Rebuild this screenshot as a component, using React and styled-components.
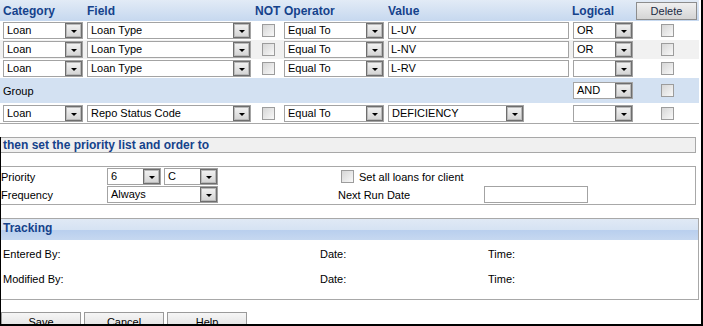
import React from 'react';
import styled, { createGlobalStyle } from 'styled-components';

const GlobalStyle = createGlobalStyle`
  html, body {
    margin: 0;
    padding: 0;
    background: #fff;
  }
  body {
    font-family: Tahoma, "Liberation Sans", Arial, sans-serif;
    font-size: 11px;
    color: #000;
  }
`;

const COLS = '84px 168px 29px 104px 184px 64px 1fr';

const Frame = styled.div`
  width: 703px;
  height: 326px;
  box-sizing: border-box;
  border-right: 2px solid #000;
  border-bottom: 2px solid #000;
  overflow: hidden;
  display: flex;
  flex-direction: column;
`;

const Criteria = styled.div`
  border-bottom: 1px solid #a8a8a8;
  margin-right: 2px;
`;

const Row = styled.div`
  display: grid;
  grid-template-columns: ${COLS};
  align-items: center;
  padding-left: 3px;
  height: ${(p) => p.$h || 19}px;
  background: ${(p) => p.$bg || '#fff'};
`;

const HeaderRow = styled(Row)`
  background: linear-gradient(#e2ebf6, #c6d8ef);
`;

const HeadLabel = styled.span`
  font-size: 12px;
  font-weight: bold;
  color: #15428b;
`;

const DeleteButton = styled.button`
  width: 61px;
  height: 18px;
  padding: 0;
  font-family: inherit;
  font-size: 11px;
  color: #1b2a44;
  border: 1px solid #8d8d8d;
  background: linear-gradient(#f0f0f0, #d4d4d4);
`;

const SelectBox = styled.div`
  display: flex;
  box-sizing: border-box;
  width: ${(p) => p.$w}px;
  height: 17px;
  border: 1px solid #a3a3a3;
  background: #fff;
  margin-left: ${(p) => p.$ml || 0}px;
`;

const SelectText = styled.span`
  flex: 1;
  padding-left: 3px;
  line-height: 15px;
  white-space: nowrap;
  overflow: hidden;
`;

const DropButton = styled.span`
  box-sizing: border-box;
  width: 17px;
  height: 15px;
  border: 1px solid #6e6e6e;
  box-shadow: inset 0 0 0 1px #b9b9b9;
  background: linear-gradient(#f3f3f3, #d3d3d3);
  display: flex;
  align-items: center;
  justify-content: center;

  &::after {
    content: '';
    margin-top: 2px;
    border-left: 3px solid transparent;
    border-right: 3px solid transparent;
    border-top: 3px solid #000;
  }
`;

const TextBox = styled.div`
  box-sizing: border-box;
  width: ${(p) => p.$w}px;
  height: 17px;
  border: 1px solid #a3a3a3;
  background: #fff;
  padding-left: 2px;
  line-height: 15px;
`;

const Check = styled.span`
  display: block;
  box-sizing: border-box;
  width: 13px;
  height: 13px;
  border: 1px solid #9c9c9c;
  background: linear-gradient(135deg, #d6d6d6, #f8f8f8);
  margin-left: ${(p) => p.$ml || 0}px;
`;

const Centered = styled.div`
  display: flex;
  justify-content: center;
`;

const GroupLabel = styled.span`
  grid-column: 1 / 6;
`;

const Lower = styled.div`
  border-left: 1px solid #000;
  display: flex;
  flex-direction: column;
  margin-top: 13px;
`;

const SectionBar = styled.div`
  box-sizing: border-box;
  width: 695px;
  height: 16px;
  border-top: 1px solid #a8a8a8;
  border-bottom: 1px solid #a8a8a8;
  border-right: 1px solid #a8a8a8;
  background: #f0f0f0;
  padding-left: 2px;
  font-size: 12px;
  font-weight: bold;
  color: #15428b;
  line-height: 14px;
`;

const PriorityBox = styled.div`
  box-sizing: border-box;
  width: 695px;
  margin-top: 13px;
  border: 1px solid #a8a8a8;
  border-left: none;
  padding: 1px 0;
  display: grid;
  grid-template-columns: 106px 231px 146px 1fr;
  grid-auto-rows: 17px;
  row-gap: 1px;
  align-items: center;
`;

const Inline = styled.div`
  display: flex;
  align-items: center;
  gap: ${(p) => p.$gap || 3}px;
  grid-column: ${(p) => p.$span || 'auto'};
`;

const Label = styled.span`
  white-space: nowrap;
`;

const Tracking = styled.div`
  box-sizing: border-box;
  width: 698px;
  margin-top: 13px;
  border: 1px solid #a8a8a8;
  border-left: none;
`;

const TrackingHead = styled.div`
  height: 21px;
  padding-left: 2px;
  background: linear-gradient(#e0e9f5 0%, #d6e3f3 50%, #b9cfee 54%, #c6d8f0 100%);
  font-size: 12px;
  font-weight: bold;
  color: #15428b;
  line-height: 18px;
`;

const TrackingBody = styled.div`
  display: grid;
  grid-template-columns: 317px 168px 1fr;
  grid-auto-rows: 16px;
  row-gap: 9px;
  align-items: center;
  padding: 6px 0 12px 2px;
`;

const ButtonBar = styled.div`
  display: flex;
  gap: 3px;
  margin-top: 12px;
`;

const ActionButton = styled.button`
  box-sizing: border-box;
  width: 80px;
  height: 20px;
  padding: 1px 0 0;
  font-family: inherit;
  font-size: 11px;
  line-height: 13px;
  color: #000;
  border: 1px solid #9a9a9a;
  background: linear-gradient(#f6f6f6, #dcdcdc);
  align-self: flex-start;
`;

const Select = ({ w, value, ml }) => (
  <SelectBox $w={w} $ml={ml}>
    <SelectText>{value}</SelectText>
    <DropButton />
  </SelectBox>
);

const rows = [
  { value: 'L-UV', logical: 'OR' },
  { value: 'L-NV', logical: 'OR', bg: '#f1f1f1' },
  { value: 'L-RV', logical: '' },
];

export default function App() {
  return (
    <>
      <GlobalStyle />
      <Frame>
        <Criteria>
          <HeaderRow $h={21}>
            <HeadLabel>Category</HeadLabel>
            <HeadLabel>Field</HeadLabel>
            <HeadLabel>NOT</HeadLabel>
            <HeadLabel>Operator</HeadLabel>
            <HeadLabel>Value</HeadLabel>
            <HeadLabel>Logical</HeadLabel>
            <DeleteButton>Delete</DeleteButton>
          </HeaderRow>
          {rows.map((r, i) => (
            <Row key={i} $bg={r.bg}>
              <Select w={80} value="Loan" />
              <Select w={164} value="Loan Type" />
              <Check $ml={7} />
              <Select w={100} value="Equal To" />
              <TextBox $w={181}>{r.value}</TextBox>
              <Select w={60} ml={1} value={r.logical} />
              <Centered>
                <Check />
              </Centered>
            </Row>
          ))}
          <Row $h={25} $bg="#d3e1f2">
            <GroupLabel>Group</GroupLabel>
            <Select w={60} ml={1} value="AND" />
            <Centered>
              <Check />
            </Centered>
          </Row>
          <Row $h={20}>
            <Select w={80} value="Loan" />
            <Select w={164} value="Repo Status Code" />
            <Check $ml={7} />
            <Select w={100} value="Equal To" />
            <Select w={136} value="DEFICIENCY" />
            <Select w={60} ml={1} value="" />
            <Centered>
              <Check />
            </Centered>
          </Row>
        </Criteria>

        <Lower>
          <SectionBar>then set the priority list and order to</SectionBar>

          <PriorityBox>
            <Label>Priority</Label>
            <Inline>
              <Select w={54} value="6" />
              <Select w={54} value="C" />
            </Inline>
            <Inline $gap={5} $span="3 / 5">
              <Check $ml={3} />
              <Label>Set all loans for client</Label>
            </Inline>
            <Label>Frequency</Label>
            <Select w={111} value="Always" />
            <Label>Next Run Date</Label>
            <TextBox $w={104} />
          </PriorityBox>

          <Tracking>
            <TrackingHead>Tracking</TrackingHead>
            <TrackingBody>
              <Label>Entered By:</Label>
              <Label>Date:</Label>
              <Label>Time:</Label>
              <Label>Modified By:</Label>
              <Label>Date:</Label>
              <Label>Time:</Label>
            </TrackingBody>
          </Tracking>

          <ButtonBar>
            <ActionButton>Save</ActionButton>
            <ActionButton>Cancel</ActionButton>
            <ActionButton>Help</ActionButton>
          </ButtonBar>
        </Lower>
      </Frame>
    </>
  );
}
